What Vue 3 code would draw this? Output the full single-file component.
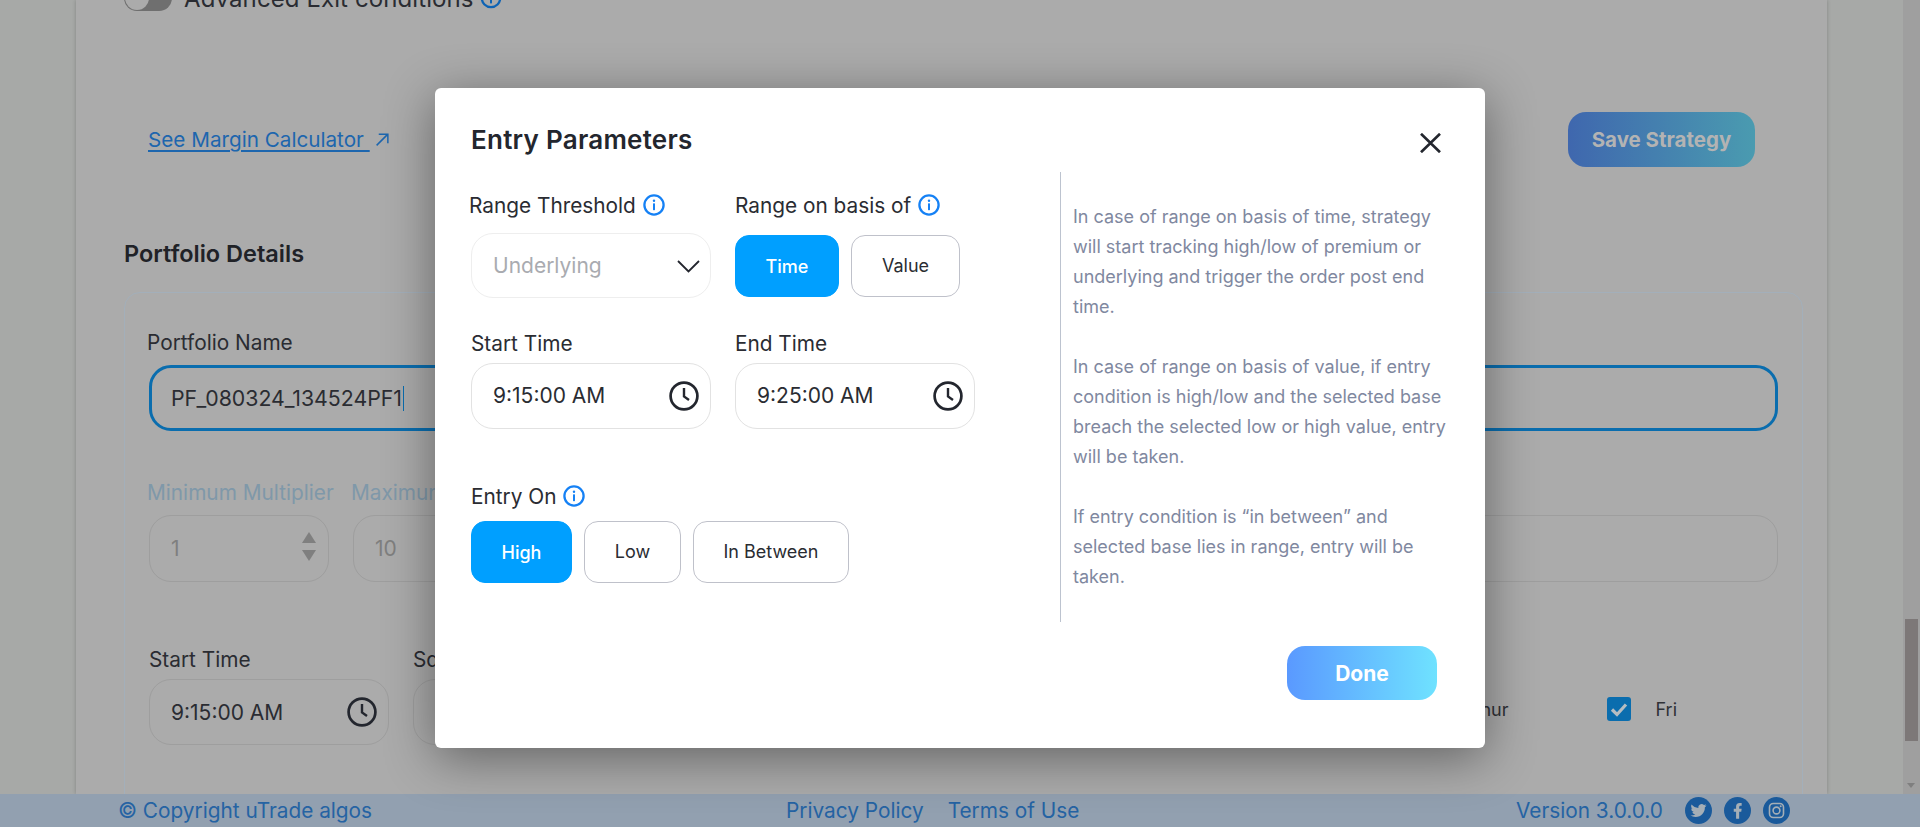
<script setup>
const rangeButtons = [
  { label: 'Time', active: true },
  { label: 'Value', active: false },
]
const entryButtons = [
  { label: 'High', active: true, cls: 'w-high' },
  { label: 'Low', active: false, cls: 'w-low' },
  { label: 'In Between', active: false, cls: 'w-between' },
]
const help = [
  'In case of range on basis of time, strategy will start tracking high/low of premium or underlying and trigger the order post end time.',
  'In case of range on basis of value, if entry condition is high/low and the selected base breach the selected low or high value, entry will be taken.',
  'If entry condition is “in between” and selected base lies in range, entry will be taken.',
]
</script>

<template>
  <div class="page">
    <div class="main">
      <div class="canvas">
        <div class="card">
          <div class="toggle-row">
            <span class="toggle"><span class="knob"></span></span>
            <span class="toggle-text">Advanced Exit conditions</span>
            <svg class="info dim" viewBox="0 0 22 22"><circle cx="11" cy="11" r="9.2" fill="none" stroke="currentColor" stroke-width="2.300"/><circle cx="11" cy="6.8" r="1.2" fill="currentColor"/><rect x="10" y="9.4" width="2" height="7" rx=".6" fill="currentColor"/></svg>
          </div>
          <div class="action-row">
            <a class="margin-link"><span class="margin-text">See Margin Calculator&nbsp;</span>
              <svg class="ext" viewBox="0 0 14 14"><path d="M1.5 12.5 12 2M3.5 2H12v8.500" fill="none" stroke="currentColor" stroke-width="1.400"/></svg>
            </a>
            <button class="save">Save Strategy</button>
          </div>
          <h2 class="portfolio-title">Portfolio Details</h2>
          <div class="panel">
            <div class="lbl pname">Portfolio Name</div>
            <div class="name-input">PF_080324_134524PF1<span class="caret"></span></div>
            <div class="row-two">
              <div class="field f180">
                <div class="lbl off">Minimum Multiplier</div>
                <div class="box h67 muted">1
                  <span class="spin"><i class="up"></i><i class="down"></i></span>
                </div>
              </div>
              <div class="field f180">
                <div class="lbl off maxl">Maximum Multiplier</div>
                <div class="box h67 muted">10</div>
              </div>
              <div class="field grow"><div class="box h67"></div></div>
            </div>
            <div class="row-three">
              <div class="field f240">
                <div class="lbl">Start Time</div>
                <div class="box h66 t7">9:15:00 AM
                  <svg class="clock" viewBox="0 0 30 30"><circle cx="15" cy="15" r="13.400" fill="none" stroke="currentColor" stroke-width="2.700"/><path d="M15 7v8.500l5 3.500" fill="none" stroke="currentColor" stroke-width="2.400"/></svg>
                </div>
              </div>
              <div class="field f240">
                <div class="lbl">Square Off Time</div>
                <div class="box h66 t7"></div>
              </div>
              <div class="days">
                <div class="day"><span class="check"><svg viewBox="0 0 24 24"><path d="M5 12.500l5 5 9-10" fill="none" stroke="#b5bdc2" stroke-width="3.200"/></svg></span>Thur</div>
                <div class="day"><span class="check"><svg viewBox="0 0 24 24"><path d="M5 12.500l5 5 9-10" fill="none" stroke="#b5bdc2" stroke-width="3.200"/></svg></span>Fri</div>
              </div>
            </div>
          </div>
        </div>
      </div>
      <div class="scrollbar">
        <span class="thumb"></span>
        <i class="scroll-arrow"></i>
      </div>
    </div>

    <footer class="footer">
      <span class="copy">© Copyright uTrade algos</span>
      <span class="links"><span>Privacy Policy</span><span>Terms of Use</span></span>
      <span class="version">Version 3.0.0.0</span>
      <span class="social">
        <svg viewBox="0 0 27 27"><circle cx="13.500" cy="13.500" r="13.500" fill="#1a5a9b"/><g transform="translate(5.500 5.500) scale(.667)"><path fill="#a4aeb6" d="M23.953 4.57a10 10 0 01-2.825.775 4.958 4.958 0 002.163-2.723c-.951.555-2.005.959-3.127 1.184a4.92 4.92 0 00-8.384 4.482C7.69 8.095 4.067 6.13 1.64 3.162a4.822 4.822 0 00-.666 2.475c0 1.71.87 3.213 2.188 4.096a4.904 4.904 0 01-2.228-.616v.06a4.923 4.923 0 003.946 4.827 4.996 4.996 0 01-2.212.085 4.936 4.936 0 004.604 3.417 9.867 9.867 0 01-6.102 2.105c-.39 0-.779-.023-1.17-.067a13.995 13.995 0 007.557 2.209c9.053 0 13.998-7.496 13.998-13.985 0-.21 0-.42-.015-.63A9.935 9.935 0 0024 4.59z"/></g></svg>
        <svg viewBox="0 0 27 27"><circle cx="13.500" cy="13.500" r="13.500" fill="#1a5a9b"/><g transform="translate(3.500 3.500) scale(.833)"><path fill="#a4aeb6" d="M14 13.500h2.500l.5-3.500h-3V8c0-1 .4-1.800 1.900-1.800H17V3.100c-.4-.1-1.500-.2-2.700-.2C11.900 2.900 10.300 4.400 10.300 7.100V10H7.500v3.500h2.800V22H14z"/></g></svg>
        <svg viewBox="0 0 27 27"><circle cx="13.500" cy="13.500" r="13.500" fill="#1a5a9b"/><rect x="6.500" y="6.500" width="14" height="14" rx="3.800" fill="none" stroke="#a4aeb6" stroke-width="1.600"/><circle cx="13.500" cy="13.500" r="3.400" fill="none" stroke="#a4aeb6" stroke-width="1.600"/><circle cx="17.700" cy="9.300" r="1" fill="#a4aeb6"/></svg>
      </span>
    </footer>

    <div class="modal">
      <div class="modal-head">
        <h1 class="modal-title">Entry Parameters</h1>
        <svg class="close" viewBox="0 0 21 20"><path d="M1 .8 20 19.200M20 .8 1 19.200" fill="none" stroke="#23262e" stroke-width="2.700"/></svg>
      </div>
      <div class="modal-body">
        <div class="form">
          <div class="form-grid">
            <div class="cell">
              <div class="m-label nudge">Range Threshold
                <svg class="info" viewBox="0 0 22 22"><circle cx="11" cy="11" r="9.600" fill="none" stroke="currentColor" stroke-width="2.300"/><circle cx="11" cy="6.800" r="1.200" fill="currentColor"/><rect x="10" y="9.200" width="2" height="7" rx=".6" fill="currentColor"/></svg>
              </div>
              <div class="select">Underlying
                <svg class="chev" viewBox="0 0 23 13"><path d="M1 1l10.500 10.500L22 1" fill="none" stroke="#23262e" stroke-width="1.800"/></svg>
              </div>
            </div>
            <div class="cell">
              <div class="m-label">Range on basis of
                <svg class="info" viewBox="0 0 22 22"><circle cx="11" cy="11" r="9.600" fill="none" stroke="currentColor" stroke-width="2.300"/><circle cx="11" cy="6.800" r="1.200" fill="currentColor"/><rect x="10" y="9.200" width="2" height="7" rx=".6" fill="currentColor"/></svg>
              </div>
              <div class="choices basis">
                <button v-for="b in rangeButtons" :key="b.label" class="choice" :class="[{ active: b.active }, b.label === 'Time' ? 'w-time' : 'w-value']">{{ b.label }}</button>
              </div>
            </div>
            <div class="cell time-cell">
              <div class="m-label">Start Time</div>
              <div class="time-input">9:15:00 AM
                <svg class="clock" viewBox="0 0 30 30"><circle cx="15" cy="15" r="13.400" fill="none" stroke="currentColor" stroke-width="2.700"/><path d="M15 7v8.500l5 3.500" fill="none" stroke="currentColor" stroke-width="2.400"/></svg>
              </div>
            </div>
            <div class="cell time-cell">
              <div class="m-label">End Time</div>
              <div class="time-input">9:25:00 AM
                <svg class="clock" viewBox="0 0 30 30"><circle cx="15" cy="15" r="13.400" fill="none" stroke="currentColor" stroke-width="2.700"/><path d="M15 7v8.500l5 3.500" fill="none" stroke="currentColor" stroke-width="2.400"/></svg>
              </div>
            </div>
          </div>
          <div class="m-label entry-label">Entry On
            <svg class="info" viewBox="0 0 22 22"><circle cx="11" cy="11" r="9.600" fill="none" stroke="currentColor" stroke-width="2.300"/><circle cx="11" cy="6.800" r="1.200" fill="currentColor"/><rect x="10" y="9.200" width="2" height="7" rx=".6" fill="currentColor"/></svg>
          </div>
          <div class="choices entry">
            <button v-for="b in entryButtons" :key="b.label" class="choice" :class="[{ active: b.active }, b.cls]">{{ b.label }}</button>
          </div>
        </div>
        <div class="help">
          <p v-for="t in help" :key="t">{{ t }}</p>
        </div>
      </div>
      <div class="modal-foot"><button class="done">Done</button></div>
    </div>
  </div>
</template>

<style>
html, body { margin: 0; padding: 0; overflow: hidden; }
</style>

<style scoped>
* { box-sizing: border-box; }
.page {
  width: 1920px; height: 827px; overflow: hidden; display: flex; flex-direction: column;
  background: #a7a9a7; font-family: Inter, "Liberation Sans", sans-serif; color: #2a2c32; position: relative;
}
button { font-family: inherit; cursor: pointer; }
.main { flex: 1; min-height: 0; display: flex; overflow: hidden; }
.canvas { flex: 1; padding: 0 76px; overflow: hidden; }
.card {
  display: flow-root; width: 1751px; height: 794px; overflow: hidden; background: #ababab; padding: 0 24px 0 48px;
  box-shadow: 0 0 4px rgba(0,0,0,.22);
}
.toggle-row { height: 26px; margin-top: -15px; display: flex; align-items: center; gap: 12px; font-size: 24px; letter-spacing: .1px; }
.toggle { width: 48px; height: 26px; border-radius: 13px; background: #6f6f6f; position: relative; display: block; }
.knob { position: absolute; left: 1px; top: 1px; width: 24px; height: 24px; border-radius: 50%; background: #ababab; }
.toggle-text { white-space: nowrap; }
.info { width: 22px; height: 22px; color: #1581f5; vertical-align: -3px; margin-left: 1px; flex: none; }
.info.dim { color: #0e63b4; margin-left: -6px; }
.action-row { margin-top: 101px; height: 55px; padding: 0 48px 0 24px; display: flex; align-items: center; justify-content: space-between; }
.margin-link { color: #1d66ae; font-size: 20.700px; display: flex; align-items: center; gap: 5px; }
.margin-text { text-decoration: underline; text-underline-offset: 3px; }
.ext { width: 15px; height: 15px; }
.save {
  width: 187px; height: 55px; border: 0; border-radius: 18px; color: #b3b3b3; font-size: 20.500px; font-weight: 700;
  background: linear-gradient(90deg, #3f67ae, #4a9bb0);
}
.portfolio-title { margin: 72px 0 0; font-size: 23.500px; line-height: 30px; font-weight: 600; color: #202227; }
.panel {
  margin-top: 23px; width: 1679px; height: 520px; border: 1px solid #a3afba; border-radius: 16px; padding: 38px 24px 0 24px;
}
.lbl { font-size: 20.800px; line-height: 24px; white-space: nowrap; }
.pname { margin-left: -2px; }
.off { color: #7f98a9; margin-left: -2px; }
.maxl { margin-left: -2px; }
.name-input {
  margin-top: 10px; height: 66px; border: 3px solid #0a6dae; border-radius: 22px; padding-left: 19px;
  display: flex; align-items: center; font-size: 21.300px;
}
.caret { width: 1px; height: 25px; background: #0a6dae; margin-left: 1px; }
.row-two { margin-top: 50px; display: flex; gap: 24px; align-items: flex-end; }
.row-three { margin-top: 66px; display: flex; gap: 24px; align-items: flex-end; }
.field { flex: none; }
.f180 { width: 180px; }
.f240 { width: 240px; }
.grow { flex: 1; }
.box {
  position: relative; margin-top: 10px; border: 1px solid #9e9e9e; border-radius: 22px; padding-left: 21px;
  display: flex; align-items: center; font-size: 21px;
}
.h67 { height: 67px; }
.h66 { height: 66px; }
.t7 { margin-top: 7px; }
.muted { color: #7f7f7f; }
.spin { position: absolute; left: 152px; top: 16px; display: flex; flex-direction: column; gap: 7px; }
.spin i { display: block; width: 0; height: 0; border-left: 7px solid transparent; border-right: 7px solid transparent; }
.up { border-bottom: 11px solid #7f7f7f; }
.down { border-top: 11px solid #7f7f7f; }
.clock { position: absolute; right: 11px; top: 17px; width: 30px; height: 30px; color: #23262e; }
.days { margin-left: auto; margin-right: 101px; margin-bottom: 24px; display: flex; gap: 99px; }
.day { display: flex; align-items: center; gap: 24px; font-size: 18px; height: 24px; color: #2f3136; }
.check { width: 24px; height: 24px; background: #0a6dae; border-radius: 3px; display: block; }
.check svg { width: 24px; height: 24px; display: block; }
.scrollbar { width: 17px; flex: none; background: #9f9f9f; position: relative; }
.thumb { position: absolute; left: 2px; top: 619px; width: 13px; height: 122px; background: #7d7878; }
.scroll-arrow { position: absolute; left: 4px; top: 783px; width: 0; height: 0; border-left: 4px solid transparent; border-right: 4px solid transparent; border-top: 5px solid #7f7f7f; }
.footer {
  height: 33px; flex: none; background: #92a0b0; color: #2563a3; font-size: 20.800px; display: flex; align-items: center; position: relative; padding-left: 118px;
}
.copy { width: 668px; }
.links { display: flex; gap: 24px; width: 730px; }
.version { width: 169px; }
.social { display: flex; gap: 12px; }
.social svg { width: 27px; height: 27px; display: block; }
.modal {
  position: absolute; left: 435px; top: 88px; width: 1050px; height: 660px; background: #fff; border-radius: 6px;
  box-shadow: 0 10px 50px rgba(0,0,0,.42); padding-top: 36px;
}
.modal-head { height: 32px; padding: 0 44px 0 36px; display: flex; justify-content: space-between; align-items: flex-start; }
.modal-title { margin: 0; font-size: 26px; line-height: 32px; font-weight: 600; color: #23262e; letter-spacing: .25px; }
.close { width: 21px; height: 20px; margin-top: 9px; }
.modal-body { margin-top: 16px; display: flex; height: 450px; }
.form { width: 625px; padding: 22px 0 0 36px; }
.form-grid { display: grid; grid-template-columns: 240px 240px; column-gap: 24px; }
.m-label { font-size: 20.800px; line-height: 24px; height: 24px; white-space: nowrap; color: #2a2c32; }
.nudge { margin-left: -2px; }
.select {
  margin-top: 15px; height: 65px; border: 1px solid #eeeeee; border-radius: 22px; padding-left: 21px; position: relative;
  display: flex; align-items: center; font-size: 21px; color: #a9abb0;
}
.chev { position: absolute; right: 10px; top: 26px; width: 23px; height: 13px; }
.choices { display: flex; }
.basis { margin-top: 17px; gap: 12px; }
.entry { margin-top: 12px; gap: 12px; }
.choice { height: 62px; border: 1px solid #bfc1ca; border-radius: 14px; background: #fff; color: #2a2c32; font-size: 18px; padding: 0 0 2px; }
.choice.active { background: #009fff; border-color: #009fff; color: #fff; font-weight: 500; padding: 0; }
.w-time { width: 104px; }
.w-value { width: 109px; }
.w-high { width: 101px; }
.w-low { width: 97px; }
.w-between { width: 156px; }
.time-cell { margin-top: 34px; }
.time-input {
  position: relative; margin-top: 7px; height: 66px; border: 1px solid #e2e2e2; border-radius: 22px; padding: 0 0 2px 21px;
  display: flex; align-items: center; font-size: 21px; color: #2a2c32;
}
.entry-label { margin-top: 56px; }
.help { border-left: 1px solid #bcc3cf; padding: 30px 0 0 12px; width: 400px; color: #7f88a0; font-size: 18px; line-height: 30px; }
.help p { margin: 0 0 30px; width: 382px; }
.modal-foot { margin-top: 24px; padding-right: 48px; display: flex; justify-content: flex-end; }
.done {
  width: 150px; height: 54px; border: 0; border-radius: 18px; color: #fff; font-size: 21px; font-weight: 700;
  background: linear-gradient(90deg, #5a99ff, #6fe2ff);
}
</style>
